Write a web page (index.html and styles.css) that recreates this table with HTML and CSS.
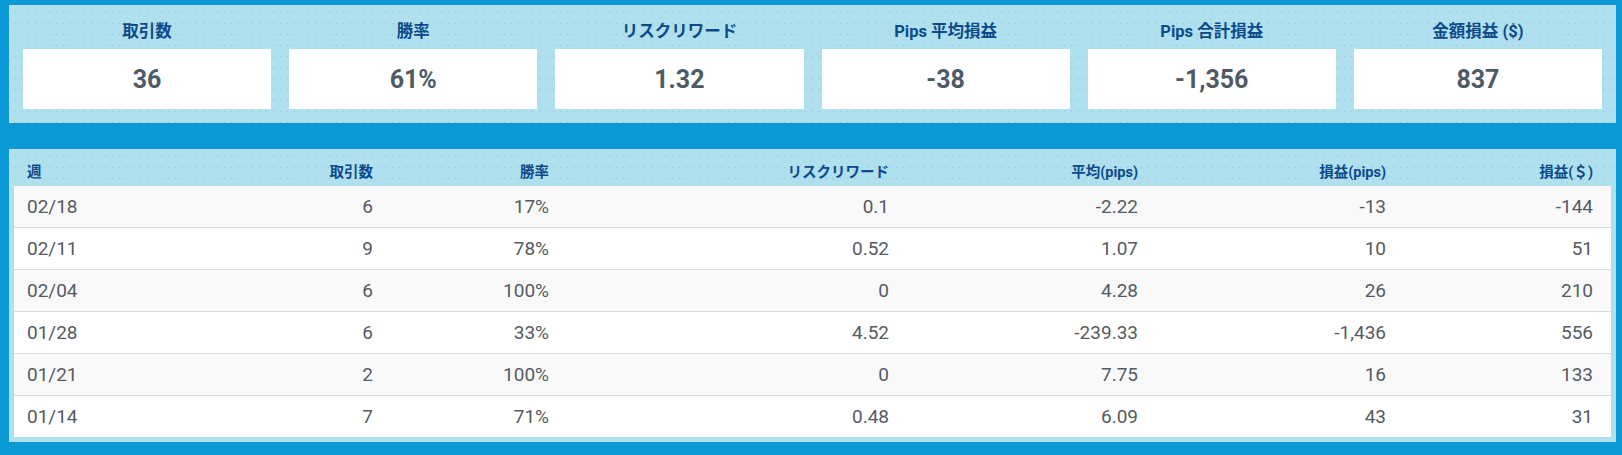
FILE: index.html
```html
<!DOCTYPE html>
<html lang="ja">
<head>
<meta charset="utf-8">
<title>週別サマリー</title>
<link rel="stylesheet" href="styles.css">
</head>
<body>
<div class="page">
  <section class="panel summary">
    <div class="stat"><div class="stat-title">取引数</div><div class="stat-card">36</div></div>
    <div class="stat"><div class="stat-title">勝率</div><div class="stat-card">61%</div></div>
    <div class="stat"><div class="stat-title">リスクリワード</div><div class="stat-card">1.32</div></div>
    <div class="stat"><div class="stat-title">Pips 平均損益</div><div class="stat-card">-38</div></div>
    <div class="stat"><div class="stat-title">Pips 合計損益</div><div class="stat-card">-1,356</div></div>
    <div class="stat"><div class="stat-title">金額損益 ($)</div><div class="stat-card">837</div></div>
  </section>
  <section class="panel weekly">
    <table class="weeks">
      <colgroup>
        <col class="c1"><col class="c2"><col class="c3"><col class="c4"><col class="c5"><col class="c6"><col class="c7">
      </colgroup>
      <thead>
        <tr><th class="left">週</th><th>取引数</th><th>勝率</th><th>リスクリワード</th><th>平均(pips)</th><th>損益(pips)</th><th>損益(＄)</th></tr>
      </thead>
      <tbody>
        <tr><td class="left">02/18</td><td>6</td><td>17%</td><td>0.1</td><td>-2.22</td><td>-13</td><td>-144</td></tr>
        <tr><td class="left">02/11</td><td>9</td><td>78%</td><td>0.52</td><td>1.07</td><td>10</td><td>51</td></tr>
        <tr><td class="left">02/04</td><td>6</td><td>100%</td><td>0</td><td>4.28</td><td>26</td><td>210</td></tr>
        <tr><td class="left">01/28</td><td>6</td><td>33%</td><td>4.52</td><td>-239.33</td><td>-1,436</td><td>556</td></tr>
        <tr><td class="left">01/21</td><td>2</td><td>100%</td><td>0</td><td>7.75</td><td>16</td><td>133</td></tr>
        <tr><td class="left">01/14</td><td>7</td><td>71%</td><td>0.48</td><td>6.09</td><td>43</td><td>31</td></tr>
      </tbody>
    </table>
  </section>
</div>
</body>
</html>
```
FILE: styles.css
```css
html, body {
  margin: 0;
  padding: 0;
  background: #0b99d5;
}
body {
  font-family: Roboto, "Noto Sans CJK JP", sans-serif;
}
.page {
  padding: 5px 6px 12px 9px;
  display: flex;
  flex-direction: column;
  gap: 26px;
}
.panel {
  background-color: #b0dfee;
  background-image: radial-gradient(circle, rgba(120, 185, 222, 0.55) 0.6px, transparent 1.1px);
  background-size: 7px 11px;
  background-position: 2px 2px;
}
.summary {
  display: grid;
  grid-template-columns: repeat(6, 1fr);
  gap: 18px;
  padding: 14px;
}
.stat-title {
  height: 26px;
  line-height: 26px;
  margin-bottom: 4px;
  text-align: center;
  font-size: 16.5px;
  font-weight: 700;
  color: #0c4a8a;
}
.stat-card {
  height: 60px;
  background: #fff;
  display: flex;
  align-items: center;
  justify-content: center;
  font-size: 25px;
  font-weight: 700;
  color: #4e5a66;
}
.weekly {
  padding: 5px;
}
.weeks {
  width: 100%;
  border-collapse: collapse;
  table-layout: fixed;
}
.c1 { width: 186px; }
.c2 { width: 191px; }
.c3 { width: 176px; }
.c4 { width: 340px; }
.c5 { width: 249px; }
.c6 { width: 248px; }
.c7 { width: 207px; }
.weeks th {
  height: 32px;
  padding: 0 18px 0 13px;
  text-align: right;
  font-size: 14.5px;
  font-weight: 700;
  color: #0c4a8a;
  vertical-align: middle;
}
.weeks td {
  height: 41px;
  padding: 0 18px 0 13px;
  text-align: right;
  font-size: 19px;
  color: #555b62;
  vertical-align: middle;
  border-bottom: 1px solid #dcdcdc;
}
.weeks tbody tr:last-child td {
  border-bottom: none;
}
.weeks tbody tr:nth-child(odd) { background: #f9f9f9; }
.weeks tbody tr:nth-child(even) { background: #ffffff; }
.weeks .left { text-align: left; }
```
